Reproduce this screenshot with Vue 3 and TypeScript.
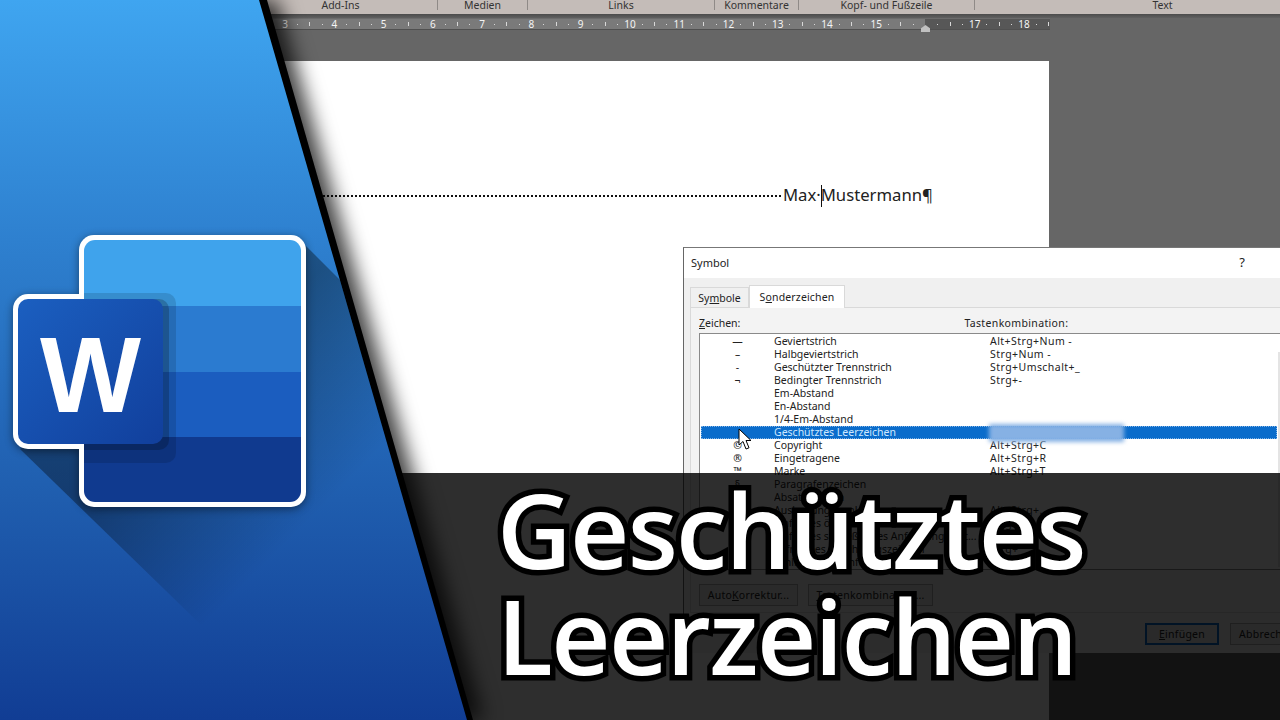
<script setup lang="ts">
const groups = [
  { name: "Add-Ins", width: 194 },
  { name: "Medien", width: 90 },
  { name: "Links", width: 187 },
  { name: "Kommentare", width: 84 },
  { name: "Kopf- und Fußzeile", width: 176 },
  { name: "Text", width: 375 },
];

const rulerNumbers = [3, 4, 5, 6, 7, 8, 9, 10, 11, 12, 13, 14, 15, "", 17, 18, ""];

const rows = [
  { sign: "—", name: "Geviertstrich", keys: "Alt+Strg+Num -" },
  { sign: "–", name: "Halbgeviertstrich", keys: "Strg+Num -" },
  { sign: "-", name: "Geschützter Trennstrich", keys: "Strg+Umschalt+_" },
  { sign: "¬", name: "Bedingter Trennstrich", keys: "Strg+-" },
  { sign: "", name: "Em-Abstand", keys: "" },
  { sign: "", name: "En-Abstand", keys: "" },
  { sign: "", name: "1/4-Em-Abstand", keys: "" },
  { sign: "", name: "Geschütztes Leerzeichen", keys: "", active: true },
  { sign: "©", name: "Copyright", keys: "Alt+Strg+C" },
  { sign: "®", name: "Eingetragene", keys: "Alt+Strg+R" },
  { sign: "™", name: "Marke", keys: "Alt+Strg+T" },
  { sign: "§", name: "Paragrafenzeichen", keys: "" },
  { sign: "¶", name: "Absatzzeichen", keys: "" },
  { sign: "…", name: "Auslassungspunkte", keys: "Alt+Strg+." },
  { sign: "‘", name: "Einfaches öffnendes Anführungszeichen", keys: "Strg+#" },
  { sign: "’", name: "Einfaches schließendes Anführungszeic...", keys: "Strg+#" },
  { sign: "“", name: "Öffnendes Anführungszeichen", keys: "Strg+" },
  { sign: "”", name: "Schließendes Anführungszeichen", keys: "Strg+" },
];
</script>

<template>
  <div class="screen">
    <div class="ribbon">
      <div v-for="group in groups" :key="group.name" class="ribbon-group" :style="{ width: group.width + 'px' }">
        {{ group.name }}
      </div>
    </div>

    <div class="ruler-wrap">
      <div class="ruler">
        <div class="ruler-cells">
          <div v-for="(num, i) in rulerNumbers" :key="i" class="ruler-cell">
            <span class="num">{{ num }}</span>
            <span class="tick dot"></span>
            <span class="tick bar"></span>
            <span class="tick dot"></span>
          </div>
        </div>
        <span class="marker"></span>
      </div>
    </div>

    <div class="workspace">
      <div class="page">
        <div class="line">
          <span class="leader"></span>
          <span class="name">Max·<i class="caret"></i>Mustermann¶</span>
        </div>
      </div>
    </div>

    <div class="dialog">
      <div class="dialog-title">
        <span>Symbol</span>
        <span class="help">?</span>
      </div>
      <div class="tabs">
        <div class="tab">Sy<u>m</u>bole</div>
        <div class="tab current">S<u>o</u>nderzeichen</div>
      </div>
      <div class="panel">
        <div class="list-head">
          <span><u>Z</u>eichen:</span>
          <span class="head-keys">Tastenkombination:</span>
        </div>
        <div class="list">
          <div v-for="row in rows" :key="row.name" class="row" :class="{ active: row.active }">
            <span class="sign">{{ row.sign }}</span>
            <span class="row-name">{{ row.name }}</span>
            <span class="row-keys">{{ row.keys }}</span>
          </div>
          <div class="blur-patch"></div>
          <div class="scroll-track"></div>
        </div>
        <div class="panel-actions">
          <button class="btn auto">Auto<u>K</u>orrektur...</button>
          <button class="btn combo"><u>T</u>astenkombination...</button>
        </div>
      </div>
      <div class="dialog-actions">
        <button class="btn insert"><u>E</u>infügen</button>
        <button class="btn cancel">Abbrechen</button>
      </div>
      <svg class="cursor" width="16" height="24" viewBox="0 0 16 24">
        <path d="M1 1 L1 17 L5 13.5 L8 21 L11 19.8 L8 12.5 L13 12.5 Z" fill="#fff" stroke="#000" stroke-width="1" />
      </svg>
    </div>

    <div class="band">
      <h1 class="title">Geschütztes<br />Leerzeichen</h1>
    </div>

    <div class="side-wrap">
      <div class="edge"></div>
      <div class="side">
        <svg class="logo" width="480" height="720" viewBox="0 0 480 720">
          <defs>
            <linearGradient id="longShadow" gradientUnits="userSpaceOnUse" x1="150" y1="440" x2="270" y2="560">
              <stop offset="0" stop-color="#000" stop-opacity="0.36" />
              <stop offset="1" stop-color="#000" stop-opacity="0" />
            </linearGradient>
            <linearGradient id="front" x1="0" y1="0" x2="1" y2="1">
              <stop offset="0" stop-color="#1b5fc0" />
              <stop offset="1" stop-color="#113f9c" />
            </linearGradient>
            <clipPath id="sheet">
              <rect x="84" y="240" width="217" height="262" rx="11" />
            </clipPath>
          </defs>
          <polygon points="306,246 660,600 340,760 20,449" fill="url(#longShadow)" />
          <g class="soft">
            <rect x="79" y="235" width="227" height="272" rx="15" fill="#fff" />
            <rect x="13" y="294" width="160" height="155" rx="15" fill="#fff" />
          </g>
          <g clip-path="url(#sheet)">
            <rect x="84" y="240" width="217" height="66" fill="#3fa3ec" />
            <rect x="84" y="306" width="217" height="66" fill="#2b7bd0" />
            <rect x="84" y="372" width="217" height="65" fill="#1b5dbf" />
            <rect x="84" y="437" width="217" height="65" fill="#103a8f" />
            <rect x="60" y="293" width="116" height="170" rx="10" fill="#000" fill-opacity="0.13" />
            <rect x="60" y="299" width="109" height="151" rx="10" fill="#000" fill-opacity="0.2" />
          </g>
          <rect x="18" y="299" width="145" height="145" rx="10" fill="url(#front)" />
          <text x="90.5" y="412" text-anchor="middle" class="logo-w">W</text>
        </svg>
      </div>
    </div>
  </div>
</template>

<style scoped>
.screen {
  position: relative;
  width: 1280px;
  height: 720px;
  overflow: hidden;
  display: flex;
  flex-direction: column;
  background: #666;
  font-family: "Noto Sans", sans-serif;
}

.ribbon {
  height: 14px;
  flex: none;
  display: flex;
  padding-left: 244px;
  background: #c4bcb8;
  color: #333;
  font-size: 10.5px;
  line-height: 11px;
}

.ribbon-group {
  flex: none;
  box-sizing: border-box;
  text-align: center;
  border-right: 1px solid #8f8a87;
  height: 10px;
}

.ribbon-group:last-child {
  border-right: 0;
}

.ruler-wrap {
  height: 16px;
  flex: none;
  box-sizing: border-box;
  padding-top: 4px;
  background: linear-gradient(#4c4c4c, #606060 4px, #666 4px);
}

.ruler {
  position: relative;
  width: 1050px;
  height: 12px;
  box-sizing: border-box;
  border-bottom: 1px solid #505050;
  border-top: 1px solid #6c6c6c;
  background: linear-gradient(90deg, #7a7a7a 925px, #575757 925px);
}

.ruler-cells {
  display: flex;
  height: 100%;
  padding-left: 279px;
  box-sizing: border-box;
  overflow: hidden;
}

.ruler-cell {
  flex: none;
  width: 49.25px;
  display: grid;
  grid-template-columns: repeat(4, 1fr);
  align-items: center;
  justify-items: center;
}

.num {
  color: #f4f4f4;
  font-size: 10px;
  line-height: 10px;
}

.tick {
  display: block;
  background: #d8d8d8;
  width: 1px;
}

.dot {
  height: 1px;
}

.bar {
  height: 4px;
}

.marker {
  position: absolute;
  left: 921px;
  top: 6px;
  width: 9px;
  height: 7px;
  background: #c0c0c0;
  clip-path: polygon(50% 0, 100% 45%, 100% 100%, 0 100%, 0 45%);
}

.workspace {
  flex: 1;
  padding: 31px 231px 0 230px;
}

.page {
  height: 100%;
  background: #fff;
  overflow: hidden;
}

.line {
  display: flex;
  align-items: center;
  height: 24px;
  margin-top: 122px;
  padding-left: 60px;
  padding-right: 116px;
}

.leader {
  flex: 1;
  height: 0;
  margin-top: 2px;
  border-bottom: 2px dotted #111;
}

.name {
  position: relative;
  margin-left: 2px;
  color: #222;
  font-size: 16.7px;
  white-space: nowrap;
}

.caret {
  display: inline-block;
  width: 1px;
  height: 22px;
  margin: 0 -1px 0 0;
  vertical-align: -6px;
  background: #111;
}

.dialog {
  position: absolute;
  left: 683px;
  top: 247px;
  width: 680px;
  height: 406px;
  box-sizing: border-box;
  border-left: 1px solid #666;
  border-top: 1px solid #777;
  background: #f0f0f0;
  color: #222;
  font-size: 10.5px;
}

.dialog-title {
  height: 30px;
  box-sizing: border-box;
  padding: 0 0 2px 7px;
  display: flex;
  align-items: center;
  background: #fff;
  font-size: 11px;
}

.help {
  margin-left: 510px;
  font-size: 13px;
}

.tabs {
  display: flex;
  align-items: flex-end;
  height: 29px;
  padding-left: 6px;
}

.tab {
  height: 20px;
  width: 59px;
  box-sizing: border-box;
  border: 1px solid #d9d9d9;
  border-bottom: 0;
  text-align: center;
  line-height: 20px;
}

.tab.current {
  position: relative;
  top: 1px;
  height: 23px;
  width: 96px;
  background: #fff;
  line-height: 22px;
  letter-spacing: 0.15px;
}

.panel {
  margin-left: 6px;
  height: 306px;
  box-sizing: border-box;
  padding: 0 0 0 8px;
  background: #f3f3f3;
  border: 1px solid #d9d9d9;
}

.list-head {
  display: flex;
  height: 25px;
  align-items: flex-end;
  padding-bottom: 3px;
  box-sizing: border-box;
}

.head-keys {
  margin-left: 224px;
  letter-spacing: 0.35px;
}

.list {
  position: relative;
  width: 581px;
  height: 237px;
  box-sizing: border-box;
  padding-top: 1px;
  background: #fff;
  border: 1px solid #8a8a8a;
  border-right: 0;
}

.row {
  display: flex;
  height: 13px;
  line-height: 13px;
  margin-left: 1px;
  width: 576px;
  white-space: nowrap;
}

.row.active {
  background: #0a6ccb;
  color: #cfe8ff;
  outline: 1px dotted #7fb2e6;
  outline-offset: -1px;
}

.sign {
  width: 73px;
  text-align: center;
}

.row-name {
  width: 216px;
  overflow: hidden;
}

.row-keys {
  letter-spacing: 0.45px;
}

.blur-patch {
  position: absolute;
  left: 289px;
  top: 90px;
  width: 135px;
  height: 18px;
  background: #86b1e4;
  filter: blur(2px);
}

.scroll-track {
  position: absolute;
  right: 0;
  top: 18px;
  width: 2px;
  height: 215px;
  background: #e4e4e4;
}

.panel-actions {
  display: flex;
  gap: 10px;
  margin-top: 14px;
}

.btn {
  height: 22px;
  padding: 0;
  font: inherit;
  letter-spacing: 0.25px;
  color: #222;
  background: #e6e6e6;
  border: 1px solid #adadad;
}

.auto {
  width: 99px;
}

.combo {
  width: 125px;
}

.dialog-actions {
  display: flex;
  gap: 11px;
  margin-top: 10px;
  padding-left: 461px;
}

.insert {
  width: 74px;
  border: 2px solid #0a6ccb;
}

.cancel {
  width: 74px;
}

.cursor {
  position: absolute;
  left: 54px;
  top: 180px;
}

.band {
  position: absolute;
  left: 0;
  right: 0;
  top: 473px;
  bottom: 0;
  box-sizing: border-box;
  padding: 3px 0 0 497px;
  background: rgba(0, 0, 0, 0.82);
}

.title {
  margin: 0;
  color: #fff;
  font-family: "Open Sans", sans-serif;
  font-size: 103px;
  font-weight: 600;
  line-height: 106px;
  letter-spacing: -1.7px;
  -webkit-text-stroke: 11px #000;
  paint-order: stroke fill;
}

.side-wrap {
  position: absolute;
  inset: 0;
  filter: drop-shadow(10px 0 10px rgba(0, 0, 0, 0.75));
}

.edge {
  position: absolute;
  inset: 0;
  background: #000;
  clip-path: polygon(0 0, 267px 0, 473px 720px, 0 720px);
}

.side {
  position: absolute;
  inset: 0;
  background: linear-gradient(#3fa5f0, #2e80cf 240px, #1f5dae 500px, #113d94 720px);
  clip-path: polygon(0 0, 259px 0, 467px 720px, 0 720px);
}

.logo {
  position: absolute;
  left: 0;
  top: 0;
}

.soft {
  filter: drop-shadow(0 2px 4px rgba(0, 0, 0, 0.45));
}

.logo-w {
  fill: #fff;
  font-family: "Liberation Sans", sans-serif;
  font-size: 107px;
  font-weight: 700;
}
</style>
